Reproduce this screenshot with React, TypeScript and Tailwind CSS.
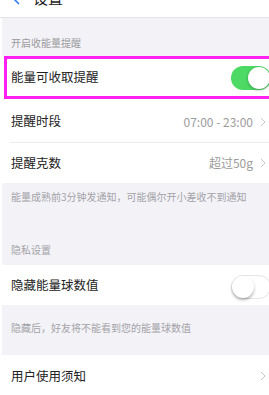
import React from "react";

const font = { fontFamily: '"Noto Sans CJK SC", "Noto Sans", sans-serif' };

function Chevron() {
  return (
    <svg width="6" height="10" viewBox="0 0 6 10" className="ml-[7px] shrink-0">
      <polyline points="1,1 5,5 1,9" fill="none" stroke="#c7c7cc" strokeWidth="1" />
    </svg>
  );
}

function Toggle({ on }: { on: boolean }) {
  return on ? (
    <div className="relative h-[24px] w-[40px] shrink-0 rounded-full bg-[#4cd964]">
      <div className="absolute right-[1px] top-[1px] h-[22px] w-[22px] rounded-full bg-white shadow-[0_1px_3px_rgba(0,0,0,0.3)]" />
    </div>
  ) : (
    <div className="relative h-[24px] w-[40px] shrink-0 rounded-full border border-[#e5e5e5] bg-white">
      <div className="absolute left-0 top-0 h-[22px] w-[22px] rounded-full bg-white shadow-[0_2px_3px_rgba(0,0,0,0.3)]" />
    </div>
  );
}

export default function App() {
  return (
    <div className="h-[395px] w-[269px] overflow-hidden bg-white" style={font}>
      {/* Nav */}
      <div className="relative h-[18px] border-b border-[#e3e3e6] bg-white">
        <div className="absolute left-[12px] top-[-12px] flex items-center gap-[13px]">
          <svg width="8" height="14" viewBox="0 0 8 14">
            <polyline points="7,1 1,7 7,13" fill="none" stroke="#2f7cf6" strokeWidth="1.6" />
          </svg>
          <span className="text-[15px] leading-[20px] text-[#222]">设置</span>
        </div>
      </div>

      {/* section: 开启收能量提醒 */}
      <div className="ml-[2px] flex h-[38px] items-end bg-[#f3f2f7] pb-[6px] pl-[9px]">
        <span className="text-[10px] leading-[14px] text-[#9a9a9e]">开启收能量提醒</span>
      </div>

      <div className="relative flex h-[45px] items-center justify-between bg-white pl-[11px] pb-[2px]">
        <span className="text-[12.5px] text-[#222]">能量可收取提醒</span>
        <div className="mr-[-2px]">
          <Toggle on />
        </div>
        <div className="pointer-events-none absolute left-[4px] right-[-6px] top-0 h-[43px] border-[3px] border-[#ff1ff0]" />
      </div>

      <div className="flex h-[41px] items-center justify-between bg-white pl-[11px] pr-[3px]">
        <span className="text-[12.5px] text-[#222]">提醒时段</span>
        <div className="flex items-center">
          <span className="text-[12px] text-[#9b9b9b]">07:00 - 23:00</span>
          <Chevron />
        </div>
      </div>
      <div className="ml-[10px] h-px bg-[#ececef]" />
      <div className="flex h-[40px] items-center justify-between bg-white pl-[11px] pr-[3px]">
        <span className="text-[12.5px] text-[#222]">提醒克数</span>
        <div className="flex items-center">
          <span className="text-[12px] text-[#9b9b9b]">超过50g</span>
          <Chevron />
        </div>
      </div>

      <div className="ml-[2px] flex h-[82px] flex-col justify-between bg-[#f3f2f7] pb-[8px] pl-[9px] pt-[7px]">
        <span className="text-[10px] leading-[14px] text-[#a3a3a7]">
          能量成熟前3分钟发通知，可能偶尔开小差收不到通知
        </span>
        <span className="text-[10px] leading-[14px] text-[#a3a3a7]">隐私设置</span>
      </div>

      <div className="flex h-[40px] items-center justify-between bg-white pl-[11px]">
        <span className="text-[12.5px] text-[#222]">隐藏能量球数值</span>
        <div className="mr-[-2px] mt-[4px]">
          <Toggle on={false} />
        </div>
      </div>

      <div className="ml-[2px] h-[50px] bg-[#f3f2f7] pl-[9px] pt-[8px]">
        <span className="text-[10px] leading-[14px] text-[#a3a3a7]">
          隐藏后，好友将不能看到您的能量球数值
        </span>
      </div>

      <div className="flex h-[44px] items-center justify-between bg-white pl-[11px] pr-[3px] pb-[2px]">
        <span className="text-[12.5px] text-[#222]">用户使用须知</span>
        <Chevron />
      </div>
    </div>
  );
}
